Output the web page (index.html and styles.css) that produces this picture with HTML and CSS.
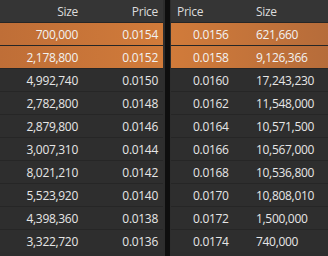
FILE: index.html
```html
<!DOCTYPE html>
<html>
<head>
<meta charset="utf-8">
<link rel="stylesheet" href="styles.css">
</head>
<body>
<div class="book">
  <div class="panel bids">
    <div class="head row"><span class="c1">Size</span><span class="c2">Price</span></div>
    <div class="row hl"><span class="c1">700,000</span><span class="c2">0.0154</span></div>
    <div class="row hl"><span class="c1">2,178,800</span><span class="c2">0.0152</span></div>
    <div class="row"><span class="c1">4,992,740</span><span class="c2">0.0150</span></div>
    <div class="row"><span class="c1">2,782,800</span><span class="c2">0.0148</span></div>
    <div class="row"><span class="c1">2,879,800</span><span class="c2">0.0146</span></div>
    <div class="row"><span class="c1">3,007,310</span><span class="c2">0.0144</span></div>
    <div class="row"><span class="c1">8,021,210</span><span class="c2">0.0142</span></div>
    <div class="row"><span class="c1">5,523,920</span><span class="c2">0.0140</span></div>
    <div class="row"><span class="c1">4,398,360</span><span class="c2">0.0138</span></div>
    <div class="row"><span class="c1">3,322,720</span><span class="c2">0.0136</span></div>
  </div>
  <div class="divider"></div>
  <div class="panel asks">
    <div class="head row"><span class="c1">Price</span><span class="c2">Size</span></div>
    <div class="row hl"><span class="c1">0.0156</span><span class="c2">621,660</span></div>
    <div class="row hl"><span class="c1">0.0158</span><span class="c2">9,126,366</span></div>
    <div class="row"><span class="c1">0.0160</span><span class="c2">17,243,230</span></div>
    <div class="row"><span class="c1">0.0162</span><span class="c2">11,548,000</span></div>
    <div class="row"><span class="c1">0.0164</span><span class="c2">10,571,500</span></div>
    <div class="row"><span class="c1">0.0166</span><span class="c2">10,567,000</span></div>
    <div class="row"><span class="c1">0.0168</span><span class="c2">10,536,800</span></div>
    <div class="row"><span class="c1">0.0170</span><span class="c2">10,808,010</span></div>
    <div class="row"><span class="c1">0.0172</span><span class="c2">1,500,000</span></div>
    <div class="row"><span class="c1">0.0174</span><span class="c2">740,000</span></div>
  </div>
</div>
</body>
</html>
```
FILE: styles.css
```css
html, body {
  margin: 0;
  padding: 0;
  background: #2b2b2b;
  width: 328px;
  height: 256px;
  overflow: hidden;
}
.book {
  display: flex;
  height: 256px;
  font-family: "Open Sans", "Noto Sans", sans-serif;
  font-size: 12px;
  letter-spacing: -0.3px;
  color: #e6e6e6;
}
.panel {
  background: #2d2d2d;
  display: flex;
  flex-direction: column;
}
.bids {
  width: 163px;
  padding-right: 2px;
}
.asks {
  flex: 1;
  padding-left: 1px;
}
.divider {
  width: 5px;
  background: #0e0e0e;
}
.row {
  display: grid;
  height: 22px;
  align-items: center;
  border-top: 1px solid #262626;
  background: #2e2e2e;
}
.head {
  height: 22px;
  border-top: none;
  background: #353535;
  color: #dcdcdc;
}
.bids .row {
  grid-template-columns: 78px 80px;
}
.bids .row span {
  text-align: right;
}
.asks .row {
  grid-template-columns: 85px 1fr;
}
.asks .row .c1 {
  padding-left: 22px;
}
.asks .row .c2 {
  padding-left: 0;
}
.asks .head .c1 {
  padding-left: 6px;
}
.bids .hl {
  background: linear-gradient(to right, #bf6e37, #d17b3a);
  color: #f2f2f2;
}
.asks .hl {
  background: linear-gradient(to right, #d17b3a, #b66c3a);
  color: #f2f2f2;
}
```
